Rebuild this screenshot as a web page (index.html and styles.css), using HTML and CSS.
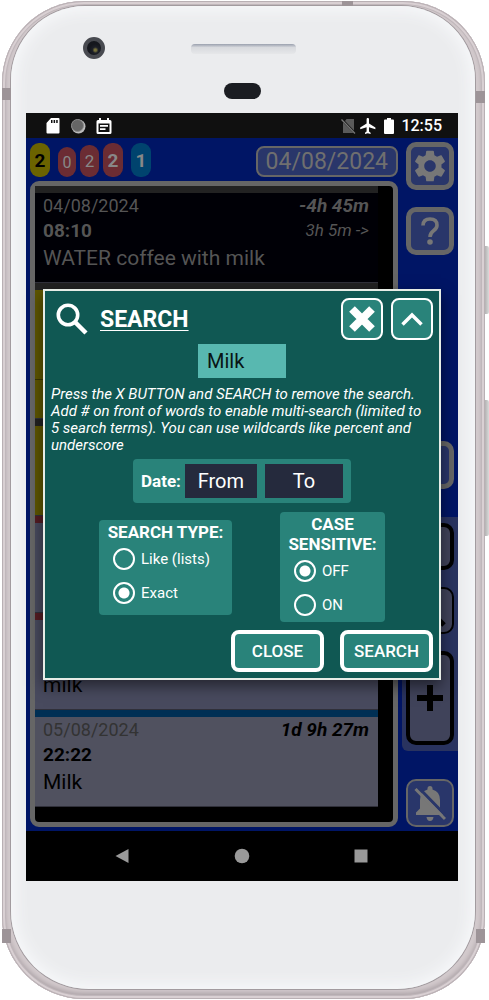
FILE: index.html
```html
<!DOCTYPE html>
<html lang="en">
<head>
<meta charset="utf-8">
<title>Search</title>
<link rel="stylesheet" href="styles.css">
</head>
<body>
<div class="phone">
  <span class="side-key key-power"></span>
  <span class="side-key key-volume"></span>
  <span class="seam seam-top"></span>
  <span class="seam seam-tl"></span>
  <span class="seam seam-tr"></span>
  <span class="seam seam-bl"></span>
  <span class="seam seam-br"></span>
  <div class="face">
    <div class="forehead">
      <span class="camera"></span>
      <span class="speaker"></span>
      <span class="sensor"></span>
    </div>
    <div class="screen">
      <div class="status">
        <svg width="14" height="16" viewBox="0 0 14 16"><path fill="#fff" fill-rule="evenodd" d="M5 0h7.500q1 0 1 1v13.500q0 1-1 1h-11q-1 0-1-1V5zM5 2v3h1.500V2zM7.600 2v3h1.500V2zM10.200 2v3h1.500V2z"/></svg>
        <svg width="16" height="16" viewBox="0 0 16 16"><circle cx="8.500" cy="8.500" r="7" fill="#bbb"/><circle cx="7.500" cy="7.500" r="6" fill="#666" stroke="#888"/></svg>
        <svg width="16" height="16" viewBox="0 0 16 16"><path fill="#fff" fill-rule="evenodd" d="M3 0h2v2h6V0h2v2h1q1.500 0 1.500 1.500v11q0 1.500-1.500 1.500H2Q.500 16 .500 14.500v-11Q.500 2 2 2h1zM2.500 5.500v8.500h11V5.500zM4 7h8v1.700H4zM4 10.300h5.500V12H4z"/></svg>
        <div class="system">
          <svg width="15" height="16" viewBox="0 0 15 16"><path fill="#5a5a5a" d="M5.500 1H13v11.500L4 3zM2 4.500L12.500 15H2z"/><path stroke="#777" stroke-width="1.300" d="M.500 1.500L14 15.500"/></svg>
          <svg width="16" height="16" viewBox="2 2 19.500 20"><path fill="#fff" d="M21 16v-2l-8-5V3.500C13 2.670 12.330 2 11.500 2S10 2.670 10 3.500V9l-8 5v2l8-2.500V19l-2 1.500V22l3.500-1 3.500 1v-1.500L13 19v-5.500l8 2.500z"/></svg>
          <svg class="battery" width="10" height="16" viewBox="0 0 10 16"><path fill="#fff" d="M3 0h4v1.500h2q1 0 1 1V15q0 1-1 1H1q-1 0-1-1V2.500q0-1 1-1h2z"/></svg>
          <span class="clock">12:55</span>
        </div>
      </div>
      <div class="app">
        <div class="main">
          <div class="topbar">
            <span class="badge yellow">2</span>
            <span class="badge red small">0</span>
            <span class="badge red mid">2</span>
            <span class="badge red">2</span>
            <span class="badge blue">1</span>
            <button class="date-button">04/08/2024</button>
          </div>
          <div class="log">
            <div class="entry dark">
              <div class="line"><span>04/08/2024</span><b class="span">-4h 45m</b></div>
              <div class="line"><b>08:10</b><i>3h 5m -&gt;</i></div>
              <div class="note">WATER coffee with milk</div>
            </div>
            <div class="entry yellow-row tall"><div class="half"></div></div>
            <div class="entry yellow-row"></div>
            <div class="entry red-row"></div>
            <div class="entry red-row last"><div class="note">milk</div></div>
            <div class="entry blue-row">
              <div class="line"><span>05/08/2024</span><b class="span">1d 9h 27m</b></div>
              <div class="line"><b>22:22</b></div>
              <div class="note">Milk</div>
            </div>
          </div>
        </div>
        <div class="sidebar">
          <button class="tool" aria-label="Settings"><svg width="32" height="32" viewBox="2 2 20 20"><path fill="#777" d="M19.140 12.940c.040-.300.060-.610.060-.940 0-.320-.020-.640-.070-.940l2.030-1.580c.180-.140.230-.410.120-.610l-1.920-3.320c-.120-.220-.370-.290-.590-.220l-2.390.960c-.500-.380-1.030-.700-1.620-.940l-.360-2.540c-.040-.240-.240-.410-.480-.410h-3.840c-.240 0-.430.170-.470.410l-.360 2.540c-.590.240-1.130.570-1.620.940l-2.390-.960c-.220-.080-.470 0-.590.220L2.740 8.870c-.120.210-.080.470.120.610l2.030 1.580c-.050.300-.090.630-.090.940s.020.640.070.940l-2.030 1.580c-.180.140-.230.410-.120.610l1.920 3.320c.120.220.370.290.590.220l2.390-.960c.500.380 1.030.700 1.620.940l.360 2.540c.050.240.240.410.480.410h3.840c.240 0 .440-.170.470-.410l.360-2.540c.590-.240 1.130-.560 1.620-.940l2.390.960c.220.080.470 0 .590-.220l1.920-3.320c.120-.220.070-.470-.120-.610l-2.010-1.580zM12 15.600c-1.980 0-3.600-1.620-3.600-3.600s1.620-3.600 3.600-3.600 3.600 1.620 3.600 3.600-1.620 3.600-3.600 3.600z"/></svg></button>
          <button class="tool" aria-label="Help"><svg width="18" height="28" viewBox="0 0 18 28"><path fill="none" stroke="#777" stroke-width="3.600" d="M2 8.500Q2 2 9 2t7 6.200q0 3-3.500 5.600T9 20"/><circle cx="9" cy="25" r="2.800" fill="#777"/></svg></button>
          <button class="tool lower" aria-label="Filter"></button>
          <div class="panel">
            <button class="tool black" aria-label="List"></button>
            <button class="tool black thin" aria-label="Find"><svg width="32" height="32" viewBox="0 0 32 32"><circle cx="12" cy="12" r="9" fill="none" stroke="#000" stroke-width="4"/><path stroke="#000" stroke-width="5" d="M19 19l11 11"/></svg></button>
            <button class="tool black big" aria-label="Add"><svg width="26" height="26" viewBox="0 0 26 26"><path stroke="#000" stroke-width="6" d="M13 0v26M0 13h26"/></svg></button>
          </div>
          <button class="tool thin" aria-label="Mute alerts"><svg width="32" height="36" viewBox="0 0 32 36"><path fill="#777" d="M2 30v-2.500l4-4V15q0-8.500 7.500-10.500V3.500Q13.500 1 16 1t2.500 2.500v1Q26 6.500 26 15v8.500l4 4V30zM12.500 32h7q-.500 4-3.500 4t-3.500-4z"/><path stroke="#293669" stroke-width="3" d="M3.500 1.500L32 31"/><path stroke="#777" stroke-width="3" d="M1.500 4L31 34"/></svg></button>
        </div>
      </div>
      <div class="nav">
        <svg width="14" height="16" viewBox="0 0 14 16"><path fill="#999" d="M13.500 1v14L.500 8z"/></svg>
        <svg width="16" height="16" viewBox="0 0 16 16"><circle cx="8" cy="8" r="7.300" fill="#999"/></svg>
        <svg width="14" height="16" viewBox="0 0 14 16"><path fill="#999" d="M.500 1.500h13v13H.500z"/></svg>
      </div>
      <form class="dialog">
        <div class="head">
          <svg width="34" height="34" viewBox="0 0 34 34"><circle cx="13" cy="13" r="9.700" fill="none" stroke="#fff" stroke-width="3.600"/><path stroke="#fff" stroke-width="4.500" d="M20 20l11 11"/></svg>
          <h1>SEARCH</h1>
          <button type="button" class="square" aria-label="Clear"><svg width="26" height="26" viewBox="0 0 26 26"><path stroke="#fff" stroke-width="8" stroke-linejoin="round" d="M3 3l20 20M23 3L3 23"/></svg></button>
          <button type="button" class="square" aria-label="Collapse"><svg width="22" height="14" viewBox="0 0 22 14"><path fill="none" stroke="#fff" stroke-width="3.500" d="M1.500 12.500L11 3l9.500 9.500"/></svg></button>
        </div>
        <input class="term" type="text" value="Milk" aria-label="Search term">
        <p class="hint">Press the X BUTTON and SEARCH to remove the search. Add # on front of words to enable multi-search (limited to 5 search terms). You can use wildcards like percent and underscore</p>
        <div class="dates"><strong>Date:</strong><button type="button" class="from">From</button><button type="button" class="to">To</button></div>
        <div class="options">
          <fieldset class="type">
            <legend>SEARCH TYPE:</legend>
            <label><input type="radio" name="type">Like (lists)</label>
            <label><input type="radio" name="type" checked>Exact</label>
          </fieldset>
          <fieldset class="case">
            <legend>CASE SENSITIVE:</legend>
            <label><input type="radio" name="case" checked>OFF</label>
            <label><input type="radio" name="case">ON</label>
          </fieldset>
        </div>
        <div class="actions"><button type="button">CLOSE</button><button type="button">SEARCH</button></div>
      </form>
    </div>
  </div>
</div>
</body>
</html>
```
FILE: styles.css
```css
* { box-sizing: border-box; }
body { margin: 0; background: #fff; font-family: Roboto, "Liberation Sans", sans-serif; }
button, input { font: inherit; margin: 0; }
button { display: flex; align-items: center; justify-content: center; padding: 0; }
svg { display: block; flex: none; }

.phone {
  position: relative;
  display: flex;
  min-height: calc(100vh - 2px);
  margin: 1px 4px 1px 2px;
  padding: 5px 10px 10px 9px;
  border-radius: 82px;
  background: #d3cacd;
  box-shadow: inset 0 0 0 1px #b9b0b4, inset 0 0 0 3px #d9d0d3, inset 0 0 0 4px #c0b7bb, inset 0 -3px 5px 3px #aaa1a5;
}
.face {
  flex: 1;
  display: flex;
  flex-direction: column;
  padding: 0 17px 108px 15px;
  border-radius: 74px 74px 78px 78px;
  background: #ebecee;
  box-shadow: inset 0 0 16px 4px #f8f9fb, 0 0 0 1px #a29b9f;
}
.forehead { position: relative; height: 107px; }
.camera, .speaker, .sensor { position: absolute; }
.camera {
  left: 57px; top: 31px; width: 22px; height: 22px; border-radius: 50%;
  border: 4px solid #484a50;
  background: radial-gradient(circle at 60% 65%, #77713a 0 1px, #1d2028 3px, #15171d 6px);
}
.speaker {
  left: 165px; top: 38px; width: 105px; height: 10px; border-radius: 4px;
  background: linear-gradient(#9aa0ae, #d8dade 35%, #e6e7e9);
}
.sensor { left: 198px; top: 77px; width: 37px; height: 16px; border-radius: 8px; background: #1b1d22; }
.side-key { position: absolute; right: -4px; width: 4px; border-radius: 0 2px 2px 0; background: linear-gradient(90deg, #b4b3b3, #dadada); }
.key-power { top: 245px; height: 68px; }
.key-volume { top: 399px; height: 136px; }
.seam { position: absolute; background: #9d9498; width: 9px; height: 14px; }
.seam-top { left: 340px; top: 0; width: 11px; height: 5px; }
.seam-tl { left: 0; top: 87px; height: 12px; }
.seam-tr { right: 0; top: 90px; height: 12px; }
.seam-bl { left: 0; bottom: 56px; }
.seam-br { right: 0; bottom: 56px; }

.screen { position: relative; flex: 1; display: flex; flex-direction: column; background: #000; }
.status { display: flex; align-items: center; gap: 10px; height: 25px; padding: 0 16px 0 20px; background: #101010; color: #fff; }
.system { display: flex; align-items: center; gap: 4px; margin-left: auto; }
.battery { margin: 0 3px 0 4px; }
.clock { font-size: 16px; font-weight: 500; }
.app { flex: 1; display: flex; gap: 4px; padding: 4px 0 4px 4px; background: #001565; }
.main { flex: 1; display: flex; flex-direction: column; gap: 4px; }
.topbar { display: flex; align-items: flex-end; gap: 4px; height: 35px; }
.badge { display: flex; align-items: center; justify-content: center; width: 20px; height: 34px; border-radius: 9px; font-size: 19px; font-weight: 700; color: #888; }
.badge.yellow { background: #6b6300; color: #000; margin-right: 4px; }
.badge.red { background: #6b2c33; }
.badge.small { width: 18px; height: 30px; font-size: 16px; font-weight: 400; }
.badge.mid { width: 19px; height: 32px; font-size: 17px; font-weight: 400; }
.badge.blue { background: #00436e; margin-left: 4px; }
.date-button { margin-left: auto; height: 31px; padding: 0 8px; border: 2px solid #666; border-radius: 8px; background: #29366a; color: #6f6f6f; font-size: 23px; }

.log { flex: 1; padding-right: 15px; border: 5px solid #666; border-radius: 9px; background: #000; font-size: 19px; }
.entry { height: 97px; padding: 0 9px 0 8px; border-top: 7px solid #222; border-bottom: 1px solid #30303a; background: #50515f; color: #000; }
.dark { background: #000006; color: #555; }
.line { display: flex; justify-content: space-between; align-items: center; line-height: 25px; }
.line span { font-size: 18px; }
.line i { font-size: 17px; }
.line b { font-weight: 700; }
.line .span { font-size: 19px; font-style: italic; }
.note { font-size: 21px; line-height: 30px; }
.yellow-row { background: linear-gradient(90deg, #5e5600 8px, #666356 8px); }
.tall { height: 136px; padding: 0; }
.half { height: 90px; border-bottom: 1px solid #3a3500; }
.red-row { border-top-color: #541c23; background: #484a5e; }
.last { padding-top: 50px; }
.blue-row { border-top-color: #002f54; }
.blue-row .line span { color: #333; }

.sidebar { display: flex; flex-direction: column; gap: 17px; width: 56px; padding: 0 4px; }
.tool { width: 48px; height: 48px; flex: none; border: 5px solid #666; border-radius: 10px; background: #29366a; color: #666; }
.thin { border-width: 2px; }
.lower { margin-top: auto; }
.panel { display: flex; flex-direction: column; gap: 17px; margin: 11px -4px; padding: 6px 4px; border-radius: 6px 0 0 6px; background: #29335f; }
.black { height: 47px; border-color: #000; border-width: 4px; background: #40435a; }
.black.thin { border-width: 2px; }
.black.big { height: 94px; }
.nav { display: flex; align-items: center; justify-content: space-between; height: 50px; padding: 0 90px 0 89px; }

.dialog {
  position: absolute; left: 17px; right: 17px; top: 176px;
  padding: 6px;
  border: 2px solid #e6ece6;
  background: #105853;
  color: #fff;
  box-shadow: 0 6px 14px rgba(0, 0, 0, .5);
}
.head { display: flex; align-items: center; gap: 8px; height: 44px; padding-left: 4px; }
h1 { flex: 1; margin: 2px 0 0 3px; font-size: 23px; line-height: 28px; font-weight: 700; text-decoration: underline; text-decoration-thickness: 1px; text-underline-offset: 3px; }
.square { width: 42px; height: 42px; border: 2px solid #fff; border-radius: 8px; background: #29837a; }
.term { display: block; width: 88px; height: 34px; margin: 3px auto 8px; padding: 0 9px; border: 0; background: #58b8b0; color: #091414; font-size: 20px; }
.hint { margin: 0; font-size: 15px; line-height: 17px; font-style: italic; }
.dates { display: flex; align-items: center; gap: 8px; width: 218px; height: 44px; margin: 5px auto 9px; padding: 0 8px; border-radius: 4px; background: #29837a; }
.dates strong { margin-right: -4px; font-size: 17px; font-weight: 700; }
.dates button { height: 34px; border: 0; background: #252a3d; color: #fff; font-size: 20px; }
.from { width: 72px; }
.to { width: 78px; }
.options { display: flex; align-items: center; justify-content: space-between; padding: 0 48px; }
fieldset { display: flex; flex-direction: column; margin: 0; padding: 0 8px; border: 0; border-radius: 4px; background: #29837a; }
legend { float: left; width: 100%; padding: 0; font-size: 17px; line-height: 20px; font-weight: 700; text-align: center; }
label { display: flex; align-items: center; gap: 6px; height: 34px; padding-left: 6px; font-size: 15px; }
.type { width: 133px; height: 95px; padding-top: 2px; }
.case { width: 105px; height: 110px; padding-top: 2px; }
input[type="radio"] { appearance: none; width: 22px; height: 22px; border: 2px solid #fff; border-radius: 50%; }
input[type="radio"]:checked { background: radial-gradient(circle, #fff 5px, transparent 6px); }
.actions { display: flex; justify-content: flex-end; gap: 16px; margin-top: 8px; }
.actions button { width: 93px; height: 42px; border: 4px solid #fff; border-radius: 8px; background: #29837a; color: #fff; font-size: 17px; font-weight: 500; }
```
